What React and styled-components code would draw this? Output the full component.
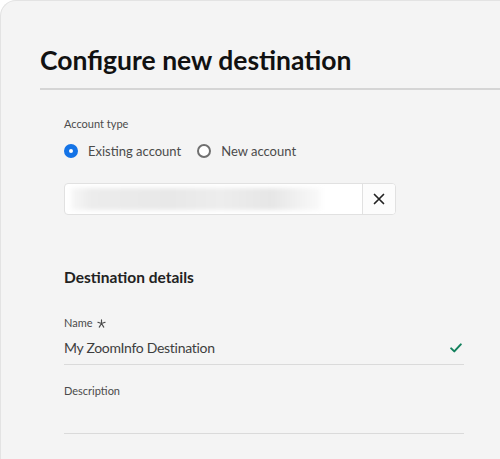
import React from "react";
import styled, { createGlobalStyle } from "styled-components";

const Global = createGlobalStyle`
  html, body {
    margin: 0;
    padding: 0;
    background: #ffffff;
  }
  body {
    font-family: Lato, "Open Sans", sans-serif;
    -webkit-font-smoothing: antialiased;
  }
`;

const Card = styled.div`
  box-sizing: border-box;
  width: 500px;
  height: 459px;
  background: #f4f4f4;
  border-top: 1px solid #e3e3e3;
  border-left: 1px solid #e3e3e3;
  border-top-left-radius: 16px;
  padding: 42px 0 0 39px;
  overflow: hidden;
`;

const Title = styled.h1`
  margin: 0;
  font-size: 26.5px;
  font-weight: 700;
  line-height: 34px;
  color: #111;
`;

const Divider = styled.div`
  height: 2px;
  background: #d5d5d5;
  margin-top: 11px;
`;

const Form = styled.div`
  padding: 26px 36px 0 24px;
  display: flex;
  flex-direction: column;
`;

const Label = styled.div`
  font-size: 11px;
  line-height: 16px;
  color: #4b4b4b;
  display: flex;
  align-items: center;
  gap: 4px;
`;

const RadioRow = styled.div`
  display: flex;
  align-items: center;
  gap: 16px;
  margin-top: 9px;
  height: 20px;
`;

const RadioOption = styled.label`
  display: flex;
  align-items: center;
  gap: 10px;
  font-size: 13px;
  color: #4b4b4b;
`;

const RadioDot = styled.span`
  box-sizing: border-box;
  width: 14px;
  height: 14px;
  border-radius: 50%;
  border: ${(p) => (p.$checked ? "5px solid #1473e6" : "2px solid #707070")};
  background: #fff;
`;

const Picker = styled.div`
  display: flex;
  width: 332px;
  height: 32px;
  margin-top: 22px;
  box-sizing: border-box;
  border: 1px solid #e1e1e1;
  border-radius: 4px;
  background: #fff;
  overflow: hidden;
`;

const PickerValue = styled.div`
  flex: 1;
  display: flex;
  align-items: center;
  padding-left: 6px;
`;

const Blur = styled.div`
  width: 250px;
  height: 22px;
  background: linear-gradient(
    90deg,
    #f7f7f7 0%,
    #ececec 8%,
    #e8e8e8 40%,
    #ededed 60%,
    #e6e6e6 80%,
    #fafafa 100%
  );
  filter: blur(2px);
`;

const ClearButton = styled.div`
  width: 32px;
  border-left: 1px solid #e1e1e1;
  display: flex;
  align-items: center;
  justify-content: center;
  background: #fcfcfc;
`;

const SectionTitle = styled.h2`
  margin: 52px 0 0;
  font-size: 15.5px;
  font-weight: 700;
  line-height: 20px;
  color: #222;
`;

const Field = styled.div`
  margin-top: ${(p) => p.$top}px;
  display: flex;
  flex-direction: column;
`;

const FieldInput = styled.div`
  display: flex;
  align-items: center;
  justify-content: space-between;
  border-bottom: 1px solid #dadada;
  box-sizing: border-box;
  height: ${(p) => p.$h}px;
  font-size: 14px;
  letter-spacing: -0.3px;
  color: #3e3e3e;
  padding-right: 2px;
`;

const CloseIcon = () => (
  <svg width="12" height="12" viewBox="0 0 12 12">
    <path d="M1.5 1.5 L10.5 10.5 M10.5 1.5 L1.5 10.5" stroke="#222" strokeWidth="1.7" strokeLinecap="round" />
  </svg>
);

const Check = () => (
  <svg width="12" height="10" viewBox="0 0 12 10">
    <path d="M1.2 5.4 L4.3 8.4 L10.8 1.4" fill="none" stroke="#12805c" strokeWidth="2" strokeLinecap="round" strokeLinejoin="round" />
  </svg>
);

const Asterisk = () => (
  <svg width="9" height="9" viewBox="0 0 10 10">
    <path d="M5 0.8 L5 5 M5 5 L1 3.6 M5 5 L9 3.6 M5 5 L2.5 9 M5 5 L7.5 9" stroke="#4b4b4b" strokeWidth="1.3" strokeLinecap="round" />
  </svg>
);

export default function App() {
  return (
    <>
      <Global />
      <Card>
        <Title>Configure new destination</Title>
        <Divider />
        <Form>
          <Label>Account type</Label>
          <RadioRow>
            <RadioOption>
              <RadioDot $checked />
              Existing account
            </RadioOption>
            <RadioOption>
              <RadioDot />
              New account
            </RadioOption>
          </RadioRow>
          <Picker>
            <PickerValue>
              <Blur />
            </PickerValue>
            <ClearButton>
              <CloseIcon />
            </ClearButton>
          </Picker>
          <SectionTitle>Destination details</SectionTitle>
          <Field $top={28}>
            <Label>
              Name <Asterisk />
            </Label>
            <FieldInput $h={34}>
              My ZoomInfo Destination
              <Check />
            </FieldInput>
          </Field>
          <Field $top={18}>
            <Label>Description</Label>
            <FieldInput $h={35} />
          </Field>
        </Form>
      </Card>
    </>
  );
}
